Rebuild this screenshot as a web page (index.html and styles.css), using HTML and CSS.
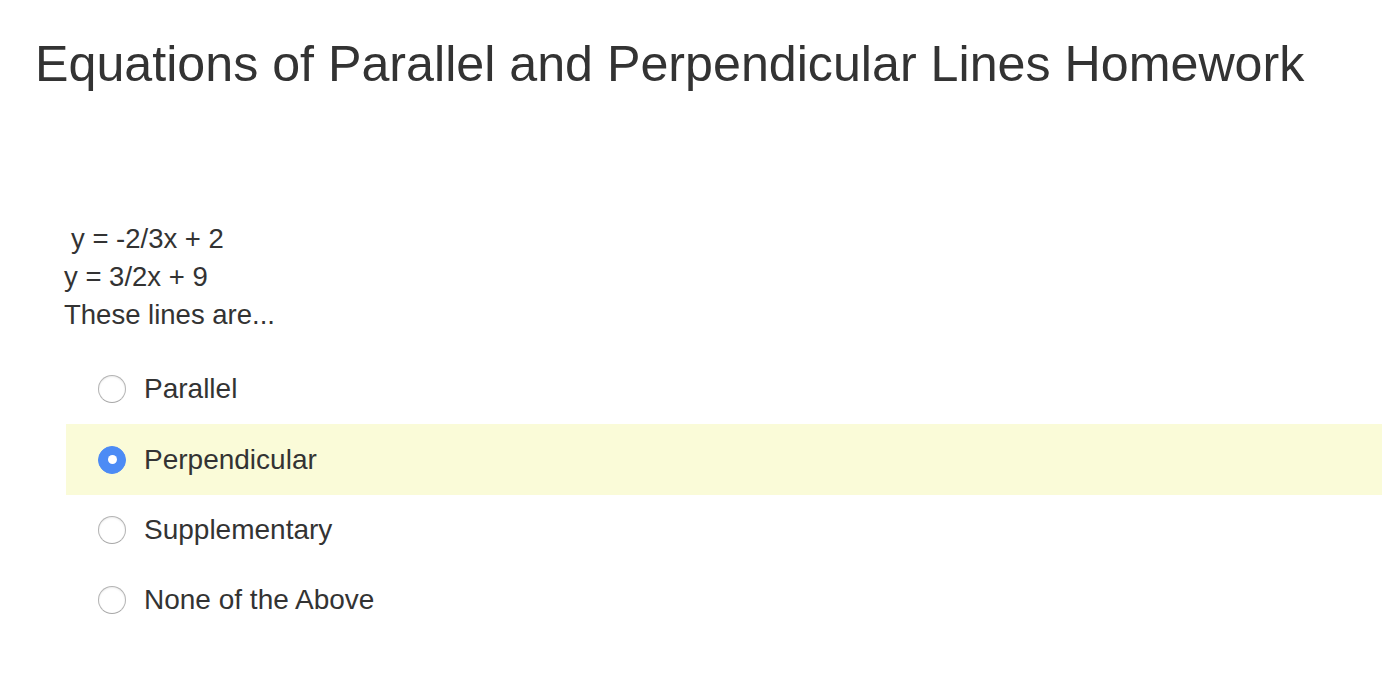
FILE: index.html
```html
<!DOCTYPE html>
<html>
<head>
<meta charset="utf-8">
<link rel="stylesheet" href="styles.css">
</head>
<body>
<div class="page">
  <h1 class="title">Equations of Parallel and Perpendicular Lines Homework</h1>
  <div class="question">
    <div class="prompt">
      <div class="line first">y = -2/3x + 2</div>
      <div class="line">y = 3/2x + 9</div>
      <div class="line">These lines are...</div>
    </div>
    <div class="options">
      <div class="option"><span class="radio"></span><span class="label">Parallel</span></div>
      <div class="option selected"><span class="radio checked"></span><span class="label">Perpendicular</span></div>
      <div class="option"><span class="radio"></span><span class="label">Supplementary</span></div>
      <div class="option"><span class="radio"></span><span class="label">None of the Above</span></div>
    </div>
  </div>
</div>
</body>
</html>
```

FILE: styles.css
```css
html, body {
  margin: 0;
  padding: 0;
  background: #ffffff;
}
body {
  font-family: "Liberation Sans", Arial, Helvetica, sans-serif;
  color: #333333;
}
.page {
  padding: 36px 0 0 35px;
}
.title {
  margin: 0;
  font-size: 50.2px;
  font-weight: normal;
  line-height: 56px;
  color: #333333;
}
.question {
  margin-top: 128px;
  padding-left: 29px;
}
.prompt {
  font-size: 27.5px;
  line-height: 38px;
}
.line.first {
  padding-left: 7px;
}
.options {
  margin-top: 20px;
  margin-left: 2px;
}
.option {
  display: flex;
  align-items: center;
  height: 70px;
  padding-left: 32px;
}
.option.selected {
  background: #fafbd8;
  height: 71px;
}
.radio {
  width: 26px;
  height: 26px;
  border-radius: 50%;
  border: 1px solid #b4b4b4;
  border-bottom-color: #a8a8a8;
  background: #ffffff;
  box-shadow: inset 0 1px 2px rgba(0, 0, 0, 0.08);
  box-sizing: content-box;
  position: relative;
  flex: none;
}
.radio.checked {
  background: #4c8bf5;
  border-color: #4c8bf5;
  box-shadow: none;
}
.radio.checked::after {
  content: "";
  position: absolute;
  left: 50%;
  top: 50%;
  width: 9px;
  height: 9px;
  margin: -4.5px 0 0 -4.5px;
  border-radius: 50%;
  background: #ffffff;
}
.label {
  margin-left: 18px;
  font-size: 28px;
}
```
